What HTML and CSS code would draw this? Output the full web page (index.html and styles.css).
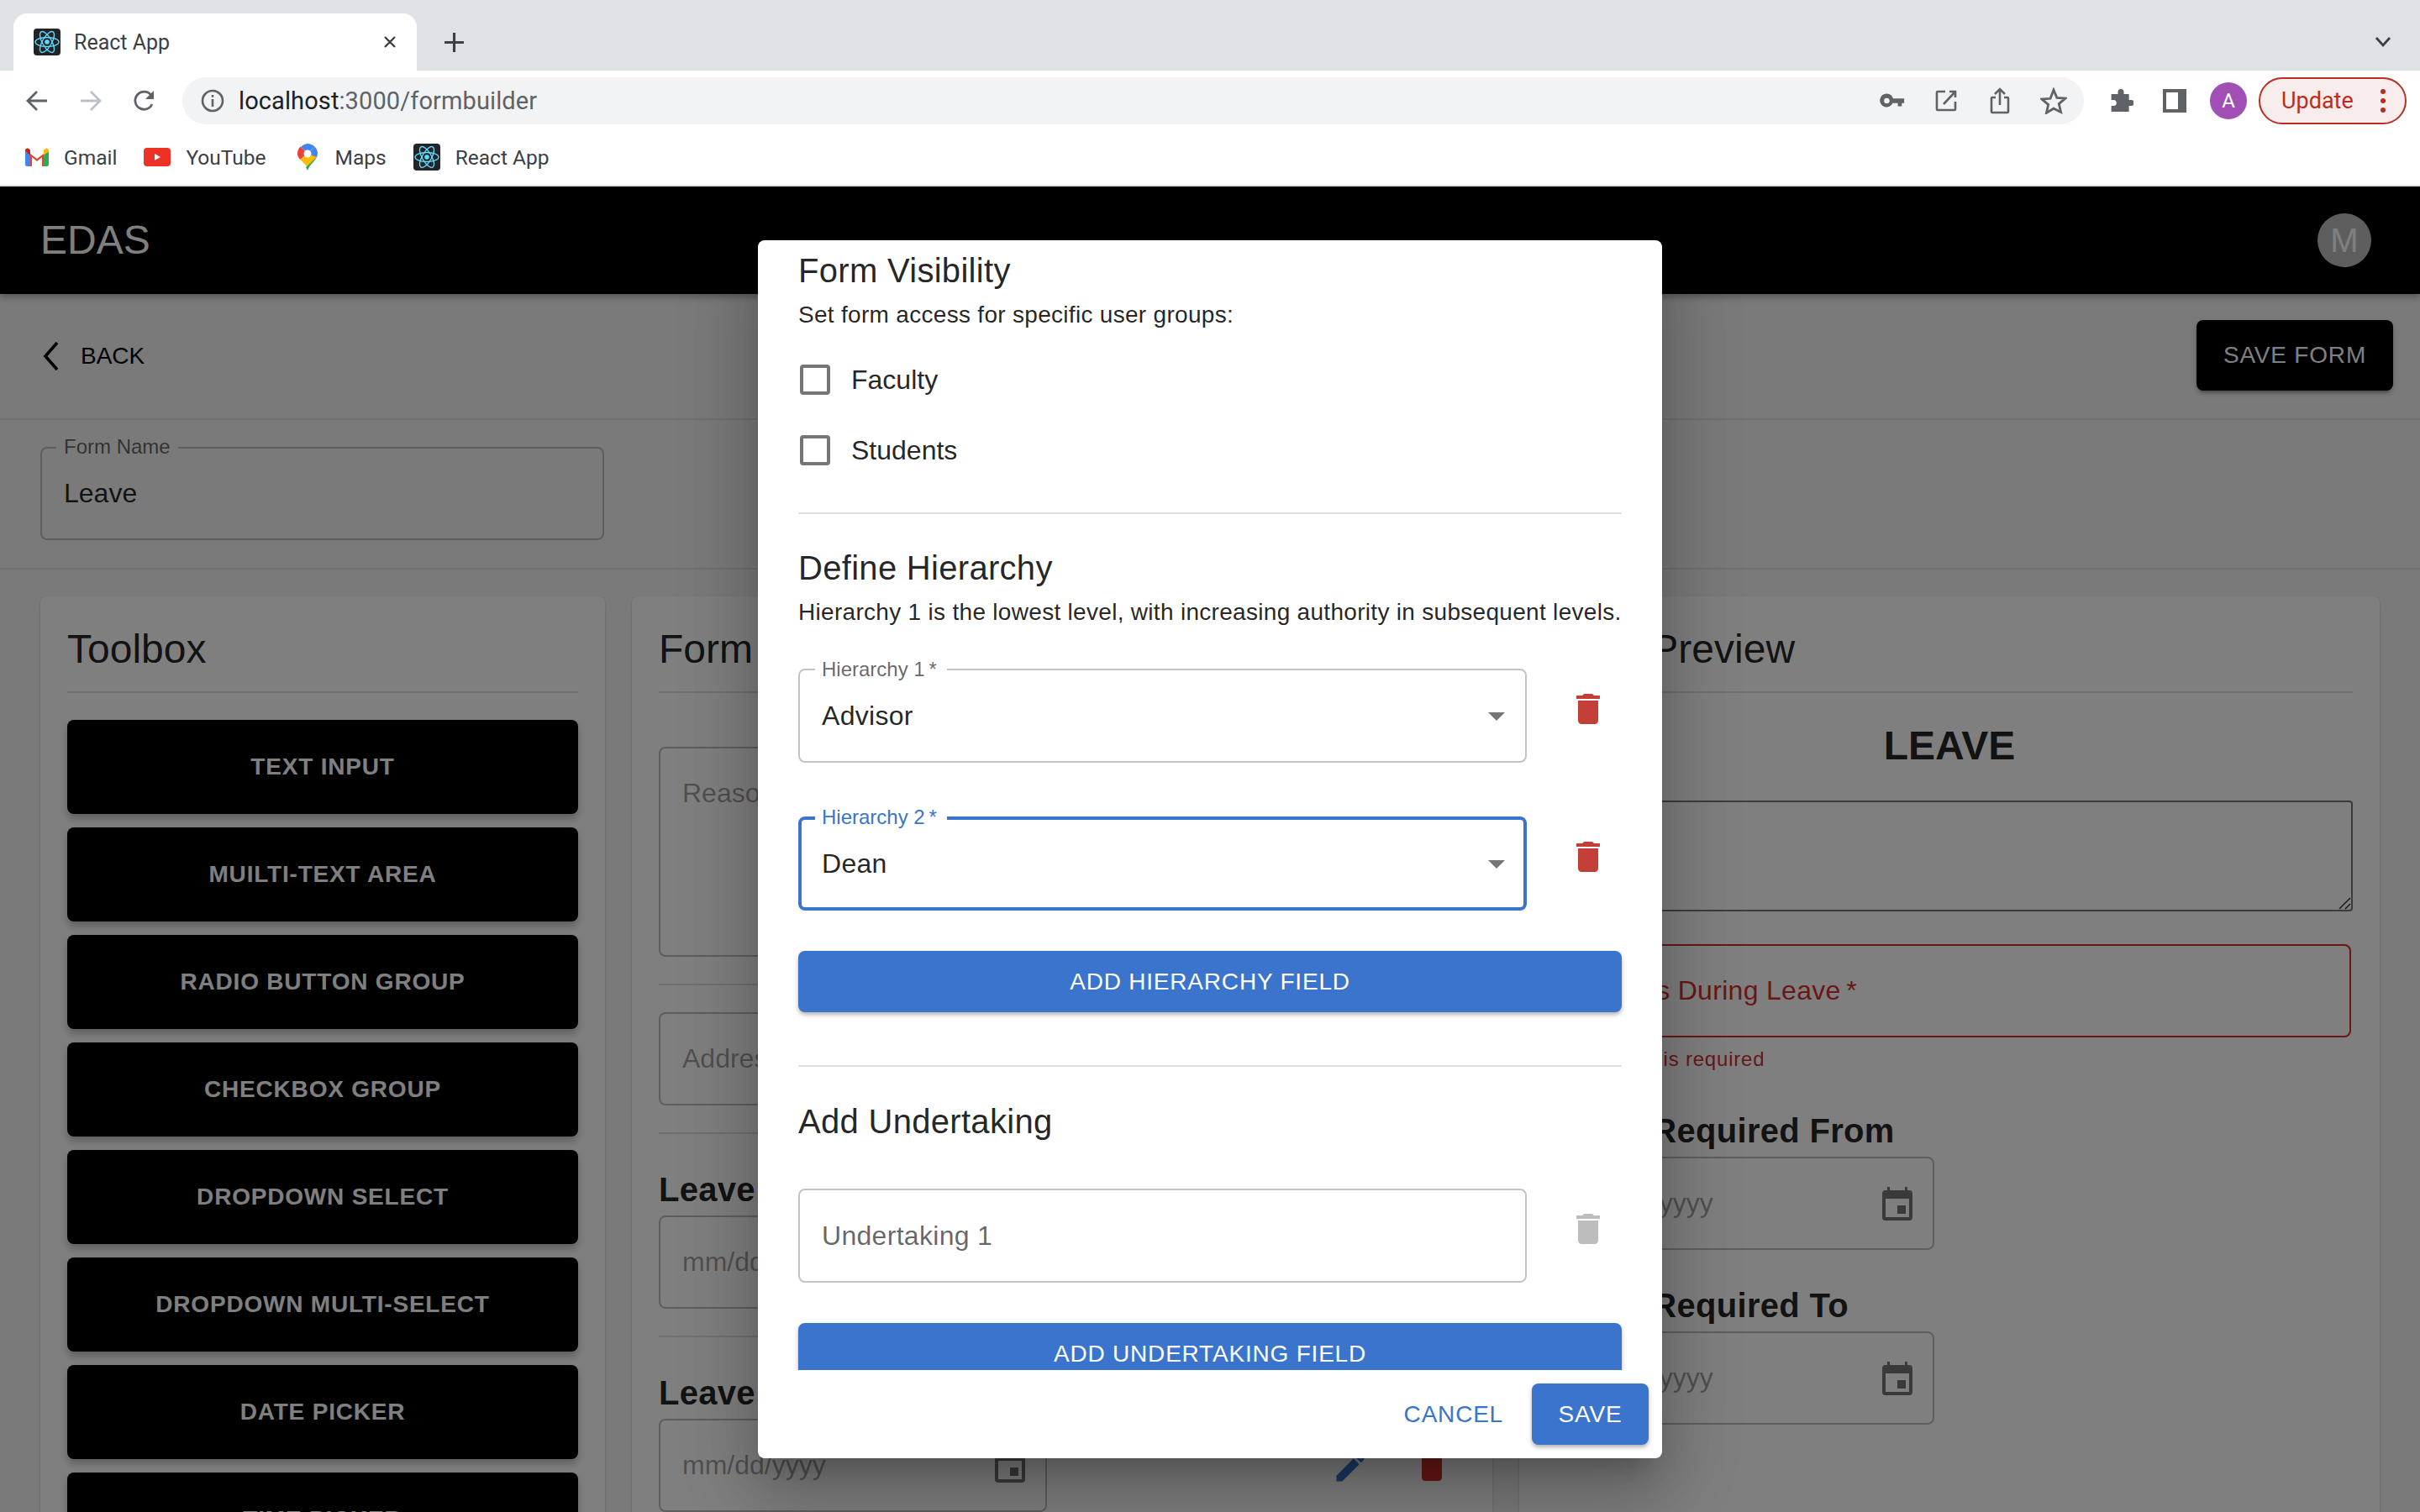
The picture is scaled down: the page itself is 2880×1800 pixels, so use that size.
FILE: index.html
```html
<!DOCTYPE html>
<html lang="en">

<head>
  <meta charset="UTF-8">
  <meta name="viewport" content="width=device-width, initial-scale=1.0">
  <title>React App</title>
  <link rel="stylesheet" href="styles.css">
</head>

<body>
  <svg class="defs" width="0" height="0">
    <defs>
      <symbol id="react-fav" viewBox="0 0 32 32">
        <rect width="32" height="32" rx="4" fill="#222428"/>
        <g fill="none" stroke="#61dafb" stroke-width="1.400">
          <ellipse cx="16" cy="16" rx="14" ry="5.500"/>
          <ellipse cx="16" cy="16" rx="14" ry="5.500" transform="rotate(60 16 16)"/>
          <ellipse cx="16" cy="16" rx="14" ry="5.500" transform="rotate(120 16 16)"/>
        </g>
        <circle cx="16" cy="16" r="2.800" fill="#61dafb"/>
      </symbol>
      <symbol id="trash" viewBox="5 3 14 18">
        <path d="M6 19c0 1.100.9 2 2 2h8c1.100 0 2-.9 2-2V7H6v12zM19 4h-3.500l-1-1h-5l-1 1H5v2h14V4z" fill="currentColor"/>
      </symbol>
      <symbol id="calendar" viewBox="0 0 36 40">
        <path d="M6 0h3v4h18V0h3v4h2a4 4 0 0 1 4 4v28a4 4 0 0 1-4 4H4a4 4 0 0 1-4-4V8a4 4 0 0 1 4-4h2zM4 14v22h28V14zM18 22h10v10H18z" fill="currentColor" fill-rule="evenodd"/>
      </symbol>
    </defs>
  </svg>

  <div class="browser">
    <div class="tabstrip">
      <div class="tab">
        <svg class="fav"><use href="#react-fav"/></svg>
        <span class="tab-title">React App</span>
        <svg class="tab-x" viewBox="0 0 16 16"><path d="M2 2l12 12M14 2L2 14" stroke="#3c4043" stroke-width="2.400"/></svg>
      </div>
      <svg class="tab-plus" viewBox="0 0 24 24"><path d="M12 1v22M1 12h22" stroke="#3c4043" stroke-width="3"/></svg>
      <svg class="tab-caret" viewBox="0 0 20 14"><path d="M2 2l8 9 8-9" fill="none" stroke="#3c4043" stroke-width="2.800"/></svg>
    </div>

    <div class="toolbar">
      <svg class="nav-icon" viewBox="0 0 28 28"><path d="M26 14H4M14 3L3 14l11 11" fill="none" stroke="#5f6368" stroke-width="2.800"/></svg>
      <svg class="nav-icon" viewBox="0 0 28 28"><path d="M2 14h22M14 3l11 11-11 11" fill="none" stroke="#bdc1c6" stroke-width="2.800"/></svg>
      <svg class="nav-icon" viewBox="0 0 28 28"><path d="M23 18a10.500 10.500 0 1 1-1.500-11" fill="none" stroke="#5f6368" stroke-width="2.800"/><path d="M25 2v10H15z" fill="#5f6368"/></svg>
      <div class="omnibox">
        <svg class="info-icon" viewBox="0 0 28 28"><circle cx="14" cy="14" r="12" fill="none" stroke="#5f6368" stroke-width="2.600"/><path d="M12.700 12h2.600v9h-2.600zM12.700 7h2.600v2.800h-2.600z" fill="#5f6368"/></svg>
        <span class="url"><span class="url-host">localhost</span>:3000/formbuilder</span>
        <div class="omni-actions">
          <svg class="omni-icon" viewBox="-2 -7 34 34"><path d="M8 1a8.500 8.500 0 0 1 8 6h14v6h-3v4h-5v-4h-6.500A8.500 8.500 0 1 1 8 1zm0 5.500a3.500 3.500 0 1 0 0 7 3.500 3.500 0 0 0 0-7z" fill="#5f6368"/></svg>
          <svg class="omni-icon" viewBox="-3 -3 32 32"><path d="M12 2H3a1 1 0 0 0-1 1v20a1 1 0 0 0 1 1h20a1 1 0 0 0 1-1V14M10 17L24 2M17 2h7v7" fill="none" stroke="#5f6368" stroke-width="2.600"/></svg>
          <svg class="omni-icon" viewBox="-3 0 32 32"><path d="M8 12H4a1 1 0 0 0-1 1v16a1 1 0 0 0 1 1h18a1 1 0 0 0 1-1V13a1 1 0 0 0-1-1h-4M13 21V3M7 8l6-6 6 6" fill="none" stroke="#5f6368" stroke-width="2.600"/></svg>
          <svg class="omni-icon" viewBox="0 0 32 32"><path d="M16 3l3.900 9.300 10 .8-7.600 6.500 2.300 9.800L16 25.200l-8.600 5.200 2.300-9.800-7.600-6.500 10-.8z" fill="none" stroke="#5f6368" stroke-width="2.800"/></svg>
        </div>
      </div>
      <svg class="ext-icon" viewBox="0 0 30 32"><path d="M11 5a4 4 0 0 1 8 0v3h7v8h3a4 4 0 0 1 0 8h-3v8H2V24h3a4 4 0 0 0 0-8H2V8h9z" fill="#5f6368"/></svg>
      <div class="side-icon"></div>
      <div class="profile">A</div>
      <div class="update">
        <span>Update</span>
        <span class="update-dots"><i></i><i></i><i></i></span>
      </div>
    </div>

    <div class="bookmarks">
      <div class="bookmark">
        <svg class="bm-icon" viewBox="0 0 28 22">
          <path d="M2 22V4l12 9 12-9v18h-6V11l-6 5-6-5v11z" fill="#ea4335"/>
          <path d="M2 22h4V9L0 4v16a2 2 0 0 0 2 2z" fill="#4285f4"/>
          <path d="M26 22h-4V9l6-5v16a2 2 0 0 1-2 2z" fill="#34a853"/>
          <path d="M22 9l6-5V3c0-2-2.500-3-4-2l-2 1.500z" fill="#fbbc04"/>
          <path d="M6 9L0 4V3c0-2 2.500-3 4-2l2 1.500z" fill="#c5221f"/>
        </svg>
        <span>Gmail</span>
      </div>
      <div class="bookmark">
        <svg class="bm-icon bm-yt" viewBox="0 0 32 22"><rect width="32" height="22" rx="4" fill="#ee3124"/><path d="M13 7l7 4-7 4z" fill="#fff"/></svg>
        <span>YouTube</span>
      </div>
      <div class="bookmark">
        <svg class="bm-icon bm-maps" viewBox="0 0 24 32">
          <path d="M12 0a12 12 0 0 1 8.500 3.500L12 12 4 4A12 12 0 0 1 12 0z" fill="#4285f4"/>
          <path d="M3.500 3.500L12 12l-9 7C1 16 0 14.500 0 12a12 12 0 0 1 3.500-8.500z" fill="#ea4335"/>
          <path d="M3 19l9-7 8-1 3 5-11 12C9 24 6 22 3 19z" fill="#fbbc04"/>
          <path d="M23 16c-2 5-8 8-11 16-1-2-1.500-3-2-4z" fill="#34a853"/>
          <path d="M20.500 3.500A12 12 0 0 1 24 12c0 1.500-.4 2.800-1 4l-11-4z" fill="#4285f4"/>
          <circle cx="12" cy="12" r="4.500" fill="#fff"/>
        </svg>
        <span>Maps</span>
      </div>
      <div class="bookmark">
        <svg class="fav"><use href="#react-fav"/></svg>
        <span>React App</span>
      </div>
    </div>
  </div>

  <div class="app">
    <header class="appbar">
      <div class="brand">EDAS</div>
      <div class="avatar">M</div>
    </header>

    <div class="actions-row">
      <div class="back">
        <svg class="back-icon" viewBox="0 0 20 34"><path d="M18 1L4 17l14 16" fill="none" stroke="#000" stroke-width="3.600"/></svg>
        <span>BACK</span>
      </div>
      <button class="save-form">SAVE FORM</button>
    </div>

    <div class="name-row">
      <div class="outlined name-field">
        <span class="float-label">Form Name</span>
        <span class="value">Leave</span>
      </div>
    </div>

    <main class="columns">
      <section class="panel">
        <h2 class="panel-title">Toolbox</h2>
        <div class="tools">
          <button class="tool">TEXT INPUT</button>
          <button class="tool">MUILTI-TEXT AREA</button>
          <button class="tool">RADIO BUTTON GROUP</button>
          <button class="tool">CHECKBOX GROUP</button>
          <button class="tool">DROPDOWN SELECT</button>
          <button class="tool">DROPDOWN MULTI-SELECT</button>
          <button class="tool">DATE PICKER</button>
          <button class="tool">TIME PICKER</button>
        </div>
      </section>

      <section class="panel">
        <h2 class="panel-title">Form Builder</h2>
        <div class="builder">
          <div class="outlined box-area"><span class="placeholder">Reason for Leave</span></div>
          <hr class="rule">
          <div class="outlined box-input"><span class="placeholder">Address During Leave</span></div>
          <hr class="rule">
          <label class="bold-label">Leave Required From</label>
          <div class="outlined box-input box-date"><span class="placeholder">mm/dd/yyyy</span></div>
          <hr class="rule">
          <label class="bold-label">Leave Required To</label>
          <div class="date-row">
            <div class="outlined box-input box-date">
              <span class="placeholder">mm/dd/yyyy</span>
              <svg class="cal"><use href="#calendar"/></svg>
            </div>
            <svg class="edit-icon" viewBox="0 0 24 24"><path d="M3 17.250V21h3.750L17.810 9.940l-3.750-3.750L3 17.250zM20.710 7.040a1 1 0 0 0 0-1.410l-2.340-2.340a1 1 0 0 0-1.410 0l-1.830 1.830 3.750 3.750 1.830-1.830z" fill="currentColor"/></svg>
            <svg class="row-trash"><use href="#trash"/></svg>
          </div>
        </div>
      </section>

      <section class="panel">
        <h2 class="panel-title">Form Preview</h2>
        <div class="preview">
          <div class="preview-name">LEAVE</div>
          <div class="native-area">
            <svg class="grip" viewBox="0 0 16 16"><path d="M2 15L15 2M9 15l6-6" stroke="#333" stroke-width="1.500"/></svg>
          </div>
          <div class="outlined error-field"><span>Address During Leave&thinsp;*</span></div>
          <div class="helper">This field is required</div>
          <label class="bold-label preview-label">Leave Required From</label>
          <div class="outlined box-input box-date">
            <span class="placeholder">mm/dd/yyyy</span>
            <svg class="cal"><use href="#calendar"/></svg>
          </div>
          <label class="bold-label preview-label">Leave Required To</label>
          <div class="outlined box-input box-date">
            <span class="placeholder">mm/dd/yyyy</span>
            <svg class="cal"><use href="#calendar"/></svg>
          </div>
        </div>
      </section>
    </main>

    <div class="backdrop"></div>

    <div class="modal">
      <div class="modal-body">
        <h3 class="modal-h modal-h-first">Form Visibility</h3>
        <p class="modal-p">Set form access for specific user groups:</p>
        <div class="check-row"><span class="check"></span><span>Faculty</span></div>
        <div class="check-row"><span class="check"></span><span>Students</span></div>
        <hr class="modal-rule modal-rule-a">
        <h3 class="modal-h">Define Hierarchy</h3>
        <p class="modal-p">Hierarchy 1 is the lowest level, with increasing authority in subsequent levels.</p>

        <div class="h-row h-row-first">
          <div class="m-field">
            <span class="m-label">Hierarchy 1&thinsp;*</span>
            <span class="m-value">Advisor</span>
            <span class="caret"></span>
          </div>
          <svg class="m-trash"><use href="#trash"/></svg>
        </div>
        <div class="h-row">
          <div class="m-field m-focus">
            <span class="m-label">Hierarchy 2&thinsp;*</span>
            <span class="m-value">Dean</span>
            <span class="caret"></span>
          </div>
          <svg class="m-trash"><use href="#trash"/></svg>
        </div>
        <button class="blue-btn add-hierarchy">ADD HIERARCHY FIELD</button>
        <hr class="modal-rule modal-rule-b">
        <h3 class="modal-h modal-h-under">Add Undertaking</h3>
        <div class="h-row h-row-under">
          <div class="m-field m-plain"><span class="m-ph">Undertaking 1</span></div>
          <svg class="m-trash m-trash-off"><use href="#trash"/></svg>
        </div>
        <button class="blue-btn add-under">ADD UNDERTAKING FIELD</button>
      </div>
      <div class="modal-foot">
        <span class="cancel">CANCEL</span>
        <button class="save">SAVE</button>
      </div>
    </div>
  </div>
</body>

</html>
```

FILE: styles.css
```css
* {
  box-sizing: border-box;
}

html, body {
  margin: 0;
  width: 2880px;
  height: 1800px;
  overflow: hidden;
  font-family: "Liberation Sans", Arial, sans-serif;
}

.defs {
  position: absolute;
}

/* browser chrome */
.browser {
  height: 222px;
  background: #fff;
  border-bottom: 2px solid #dfe1e5;
  font-family: Roboto, "Liberation Sans", sans-serif;
  color: #3c4043;
}

.tabstrip {
  height: 84px;
  background: #dee1e6;
  display: flex;
  align-items: center;
  padding-left: 16px;
  padding-right: 34px;
}

.tab {
  width: 480px;
  height: 68px;
  margin-top: 16px;
  background: #fff;
  border-radius: 16px 16px 0 0;
  display: flex;
  align-items: center;
  padding: 0 24px;
}

.fav {
  width: 32px;
  height: 32px;
  flex: none;
}

.tab-title {
  font-size: 25px;
  margin-left: 16px;
  flex: 1;
}

.tab-x {
  width: 16px;
  height: 16px;
}

.tab-plus {
  width: 25px;
  height: 25px;
  margin-left: 32px;
  margin-top: 16px;
}

.tab-caret {
  width: 20px;
  height: 14px;
  margin-left: auto;
  margin-top: 16px;
}

.toolbar {
  height: 64px;
  padding-top: 8px;
  display: flex;
  align-items: flex-start;
  padding-left: 30px;
}

.nav-icon {
  width: 28px;
  height: 28px;
  margin-top: 14px;
  margin-right: 36px;
}

.omnibox {
  width: 2263px;
  height: 56px;
  margin-left: -5px;
  background: #f1f3f4;
  border-radius: 28px;
  display: flex;
  align-items: center;
  padding-left: 22px;
}

.info-icon {
  width: 28px;
  height: 28px;
}

.url {
  font-size: 29px;
  letter-spacing: 0.1px;
  margin-left: 17px;
  color: #5f6368;
}

.url-host {
  color: #202124;
}

.omni-actions {
  margin-left: auto;
  display: flex;
  align-items: center;
  gap: 32px;
  padding-right: 20px;
}

.omni-icon {
  width: 32px;
  height: 32px;
}

.ext-icon {
  width: 30px;
  height: 28px;
  margin: 13px 0 0 29px;
}

.side-icon {
  width: 28px;
  height: 28px;
  margin: 14px 0 0 35px;
  border: 4px solid #5f6368;
  border-right-width: 10px;
}

.profile {
  width: 44px;
  height: 44px;
  border-radius: 50%;
  margin: 6px 0 0 28px;
  background: #a24fb5;
  color: #fff;
  font-size: 24px;
  display: flex;
  align-items: center;
  justify-content: center;
}

.update {
  width: 176px;
  height: 56px;
  margin-left: 14px;
  border: 2px solid #bb2d22;
  border-radius: 28px;
  background: #f8eded;
  color: #bb2d22;
  font-size: 27px;
  display: flex;
  align-items: center;
  padding-left: 25px;
}

.update-dots {
  margin-left: auto;
  margin-right: 23px;
  display: flex;
  flex-direction: column;
  gap: 5px;
}

.update-dots i {
  width: 6px;
  height: 6px;
  border-radius: 50%;
  background: #bb2d22;
}

.bookmarks {
  height: 72px;
  padding-top: 6px;
  display: flex;
  align-items: center;
  padding-left: 30px;
  gap: 32px;
  font-size: 24.5px;
}

.bookmark {
  display: flex;
  align-items: center;
  gap: 18px;
}

.bm-icon {
  width: 28px;
  height: 22px;
  flex: none;
}

.bm-yt {
  width: 32px;
}

.bm-maps {
  width: 24px;
  height: 32px;
  margin-left: 5px;
  margin-right: 3px;
}

/* app */
.app {
  position: relative;
  height: 1578px;
  background: #f5f5f5;
  overflow: hidden;
  color: rgba(0, 0, 0, 0.87);
}

.appbar {
  height: 128px;
  background: #000;
  color: #fff;
  display: flex;
  align-items: center;
  justify-content: space-between;
  padding: 0 48px;
  box-shadow: 0 4px 8px rgba(0, 0, 0, 0.3);
  position: relative;
}

.brand {
  font-size: 48px;
  margin-top: -2px;
}

.avatar {
  width: 64px;
  height: 64px;
  border-radius: 50%;
  background: #bdbdbd;
  color: #fff;
  font-size: 40px;
  display: flex;
  align-items: center;
  justify-content: center;
  margin-right: 10px;
}

.actions-row {
  height: 150px;
  display: flex;
  align-items: center;
  justify-content: space-between;
  padding: 0 32px 0 50px;
  border-bottom: 2px solid #e0e0e0;
}

.back {
  display: flex;
  align-items: center;
  gap: 26px;
  font-size: 28px;
  color: #000;
}

.back-icon {
  width: 20px;
  height: 34px;
}

.save-form {
  width: 234px;
  height: 84px;
  margin-top: -2px;
  border: none;
  border-radius: 8px;
  background: #000;
  color: #fff;
  font: 28px "Liberation Sans", sans-serif;
  letter-spacing: 0.8px;
  box-shadow: 0 6px 2px -4px rgba(0, 0, 0, 0.2), 0 4px 4px rgba(0, 0, 0, 0.14), 0 2px 10px rgba(0, 0, 0, 0.12);
}

.name-row {
  height: 178px;
  padding: 32px 48px 0;
  border-bottom: 2px solid #e0e0e0;
}

.outlined {
  position: relative;
  border: 2px solid #bdbdbd;
  border-radius: 8px;
}

.name-field {
  width: 671px;
  height: 111px;
  display: flex;
  align-items: center;
  padding-left: 26px;
  font-size: 32px;
}

.float-label {
  position: absolute;
  top: -16px;
  left: 17px;
  padding: 0 9px;
  background: #f5f5f5;
  font-size: 24px;
  line-height: 28px;
  color: rgba(0, 0, 0, 0.6);
}

.columns {
  display: flex;
  gap: 32px;
  padding: 32px 48px 0;
}

.panel {
  flex: 1 1 0;
  min-width: 0;
  min-height: 1400px;
  padding: 32px;
  background: #fff;
  border-radius: 8px;
  box-shadow: 0 1px 3px rgba(0, 0, 0, 0.2);
}

.panel:first-child {
  flex: 0 0 672px;
}

.panel-title {
  margin: 0;
  height: 83px;
  padding-top: 1px;
  font-size: 48px;
  line-height: 60px;
  font-weight: 400;
  border-bottom: 2px solid #e0e0e0;
}

.tools {
  display: flex;
  flex-direction: column;
  gap: 16px;
  margin-top: 32px;
}

.tool {
  height: 112px;
  border: none;
  border-radius: 8px;
  background: #000;
  color: #fff;
  font: bold 28px "Liberation Sans", sans-serif;
  letter-spacing: 0.8px;
  flex: none;
  box-shadow: 0 6px 10px rgba(0, 0, 0, 0.25);
}

.builder {
  padding-top: 64px;
}

.placeholder {
  color: rgba(0, 0, 0, 0.38);
  font-size: 32px;
}

.box-area {
  height: 250px;
  padding: 35px 26px;
}

.box-input {
  height: 111px;
  display: flex;
  align-items: center;
  padding: 0 26px;
}

.box-date {
  width: 462px;
  justify-content: space-between;
}

.rule {
  height: 2px;
  margin: 32px 0;
  border: none;
  background: #e0e0e0;
}

.bold-label {
  display: block;
  font-weight: bold;
  font-size: 40px;
  line-height: 46px;
  letter-spacing: 0.3px;
  margin-top: 43px;
  margin-bottom: 8px;
  white-space: nowrap;
}

.date-row {
  display: flex;
  align-items: center;
}

.cal {
  width: 36px;
  height: 40px;
  color: rgba(0, 0, 0, 0.54);
  margin-right: -2px;
}

.edit-icon {
  width: 44px;
  height: 44px;
  margin-left: 339px;
  margin-top: 4px;
  color: #3a74cc;
}

.row-trash {
  width: 28px;
  height: 36px;
  margin-left: 61px;
  color: #d32f2f;
}

.preview-name {
  text-align: center;
  font-weight: bold;
  font-size: 48px;
  line-height: 56px;
  margin-top: 35px;
  margin-bottom: 37px;
}

.native-area {
  position: relative;
  height: 132px;
  border: 2px solid #767676;
  border-radius: 4px;
  margin-bottom: 39px;
}

.grip {
  position: absolute;
  right: 0;
  bottom: 0;
  width: 16px;
  height: 16px;
}

.error-field {
  height: 111px;
  margin-right: 2px;
  border-color: #d32f2f;
  color: #d32f2f;
  display: flex;
  align-items: center;
  padding-left: 26px;
  font-size: 32px;
  letter-spacing: 0.3px;
}

.helper {
  font-size: 24px;
  line-height: 28px;
  letter-spacing: 0.8px;
  color: #d32f2f;
  margin: 12px 0 0 28px;
}

.preview-label {
  margin-top: 48px;
}

.preview-label ~ .preview-label {
  margin-top: 43px;
}

.backdrop {
  position: absolute;
  inset: 0;
  background: rgba(0, 0, 0, 0.5);
}

/* dialog */
.modal {
  position: absolute;
  left: 902px;
  top: 64px;
  width: 1076px;
  height: 1450px;
  background: #fff;
  border-radius: 8px;
  display: flex;
  flex-direction: column;
  color: rgba(0, 0, 0, 0.87);
  box-shadow: 0 22px 30px -14px rgba(0, 0, 0, 0.2), 0 48px 76px 6px rgba(0, 0, 0, 0.14), 0 18px 92px 16px rgba(0, 0, 0, 0.12);
}

.modal-body {
  height: 1345px;
  flex: none;
  overflow: hidden;
  padding: 0 48px;
}

.modal-h {
  margin: 0;
  font-size: 40px;
  line-height: 48px;
  font-weight: 400;
  letter-spacing: 0.3px;
}

.modal-h-first {
  margin-top: 12px;
}

.modal-p {
  margin: 13px 0 0;
  font-size: 28px;
  line-height: 32px;
  letter-spacing: 0.3px;
}

.check-row {
  display: flex;
  align-items: center;
  height: 84px;
  gap: 25px;
  font-size: 32px;
  padding-left: 2px;
}

.modal-p + .check-row {
  margin-top: 19px;
}

.check {
  width: 36px;
  height: 36px;
  border: 4px solid #757575;
  border-radius: 4px;
}

.modal-rule {
  height: 2px;
  border: none;
  background: #e0e0e0;
  margin: 0;
}

.modal-rule-a {
  margin-top: 32px;
  margin-bottom: 40px;
}

.modal-rule-b {
  margin-top: 63px;
}

.h-row {
  display: flex;
  align-items: flex-start;
  margin-top: 64px;
}

.h-row-first {
  margin-top: 51px;
}

.m-field {
  position: relative;
  width: 867px;
  height: 112px;
  border: 2px solid #c4c4c4;
  border-radius: 8px;
  display: flex;
  align-items: center;
  padding: 0 26px;
  font-size: 32px;
  letter-spacing: 0.3px;
}

.m-focus {
  border: 4px solid #3a74cc;
  padding: 0 24px;
}

.m-label {
  position: absolute;
  top: -15px;
  left: 18px;
  padding: 0 12px 0 8px;
  background: #fff;
  font-size: 24px;
  line-height: 28px;
  letter-spacing: 0;
  color: rgba(0, 0, 0, 0.6);
}

.m-focus .m-label {
  top: -17px;
  left: 16px;
  color: #3a74cc;
}

.caret {
  position: absolute;
  right: 24px;
  top: 50%;
  margin-top: -4px;
  border-left: 10px solid transparent;
  border-right: 10px solid transparent;
  border-top: 10px solid #757575;
}

.m-focus .caret {
  right: 22px;
}

.m-ph {
  color: rgba(0, 0, 0, 0.6);
}

.m-trash {
  width: 28px;
  height: 36px;
  margin: 30px 0 0 59px;
  color: #c33f38;
}

.m-trash-off {
  color: #bdbdbd;
}

.blue-btn {
  display: block;
  width: 100%;
  height: 73px;
  border: none;
  border-radius: 8px;
  background: #3a74cc;
  color: #fff;
  font: 28px "Liberation Sans", sans-serif;
  letter-spacing: 0.8px;
  box-shadow: 0 3px 5px rgba(0, 0, 0, 0.3);
}

.add-hierarchy {
  margin-top: 48px;
}

.modal-h-under {
  margin-top: 41px;
}

.h-row-under {
  margin-top: 56px;
}

.add-under {
  margin-top: 48px;
}

.modal-foot {
  flex: 1;
  display: flex;
  align-items: center;
  justify-content: flex-end;
  padding: 0 16px 0 0;
}

.cancel {
  font-size: 28px;
  letter-spacing: 0.8px;
  color: #3a74cc;
  margin-right: 34px;
}

.save {
  width: 139px;
  height: 73px;
  border: none;
  border-radius: 8px;
  background: #3a74cc;
  color: #fff;
  font: 28px "Liberation Sans", sans-serif;
  letter-spacing: 0.8px;
  box-shadow: 0 3px 5px rgba(0, 0, 0, 0.3);
}
```
